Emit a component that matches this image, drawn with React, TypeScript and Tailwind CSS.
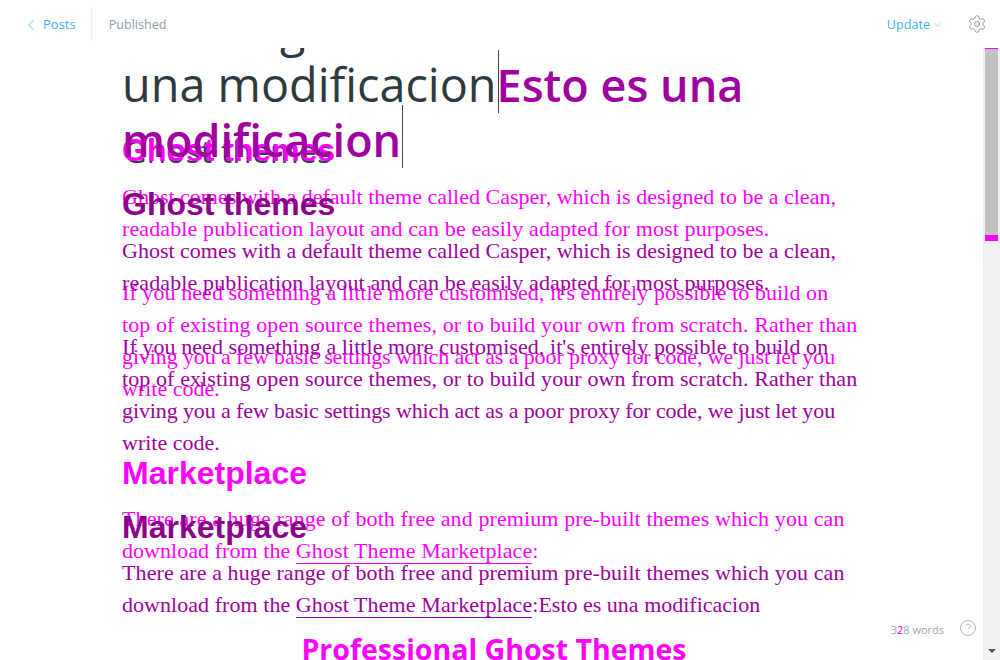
import { ChevronDown, ChevronLeft, CircleHelp, Settings } from "lucide-react";

const SANS = "font-['Open_Sans',sans-serif]";
const SERIF = "font-['Liberation_Serif',serif]";
const ARIAL = "font-['Liberation_Sans',sans-serif]";

function Caret() {
  return (
    <span className="relative inline-block w-0">
      <span className="absolute -top-[52px] left-[1px] h-[63px] w-px bg-[#444]" />
    </span>
  );
}

function Article({ tone, heading, rule, extra }: { tone: string; heading: string; rule: string; extra?: boolean }) {
  return (
    <div className={`${tone} ${SERIF} text-[22px] leading-[32px]`}>
      <h2 className={`${ARIAL} ${heading} mb-[13px] text-[32px] font-bold leading-[36px]`}>Ghost themes</h2>
      <p className="mb-[32px] whitespace-nowrap">
        Ghost comes with a default theme called Casper, which is designed to be a clean,
        <br />
        <span className="tracking-[0.125px]">readable publication layout and can be easily adapted for most purposes.</span>
      </p>
      <p className="whitespace-nowrap">
        <span className="tracking-[0.07px]">If you need something a little more customised, it's entirely possible to build on</span>
        <br />
        <span className="tracking-[0.1px]">top of existing open source themes, or to build your own from scratch. Rather than</span>
        <br />
        <span className="-tracking-[0.11px]">giving you a few basic settings which act as a poor proxy for code, we just let you</span>
        <br />
        write code.
      </p>
      <h2 className={`${ARIAL} ${heading} mb-[12px] mt-[50px] text-[32px] font-bold leading-[36px]`}>Marketplace</h2>
      <p className="whitespace-nowrap">
        <span className="tracking-[0.1px]">There are a huge range of both free and premium pre-built themes which you can</span>
        <br />
        <span className="tracking-[0.05px]">download from the </span>
        <span className={`border-b tracking-[0.1px] ${rule}`}>Ghost Theme Marketplace</span>:
        {!extra && "Esto es una modificacion"}
      </p>
      {extra && (
        <h3 className={`${SANS} mt-[62px] w-[744px] text-center text-[28.5px] font-bold leading-[40px]`}>
          Professional Ghost Themes
        </h3>
      )}
    </div>
  );
}

export default function App() {
  return (
    <div className={`flex h-[660px] w-[1000px] flex-col overflow-hidden bg-white ${SANS}`}>
      <header className="relative z-20 flex h-[48px] shrink-0 items-center bg-white pl-[22px] pr-[13px] text-[13px]">
        <a className="mt-[1px] flex items-center gap-[3px] pr-[15px] text-[#3eb0ef]">
          <ChevronLeft size={18} strokeWidth={1} />
          Posts
        </a>
        <span className="h-[36px] w-px bg-[#e5eff5]" />
        <span className="ml-[17px] mt-[2px] text-[12.6px] text-[#8e9cac]">Published</span>
        <a className="ml-auto mt-[2px] flex items-center gap-[2px] text-[12.6px] text-[#3eb0ef]">
          Update
          <ChevronDown size={12} strokeWidth={1} className="text-[#5a8fb0]" />
        </a>
        <Settings size={20} strokeWidth={1} className="ml-[23px] text-[#738a94]" />
      </header>

      <div className="relative flex min-h-0 flex-1">
        <main className="relative flex-1 overflow-hidden pl-[122px]">
          <div className="absolute left-[124px] top-[83px] whitespace-nowrap text-[31px] font-normal leading-[40px] tracking-[0.5px] text-[#394047]">
            Ghost themes
          </div>

          <div className="relative -mt-[46px]">
            <div className="absolute left-0 top-[130px] w-full">
              <Article tone="text-[#ff00ff]" heading="" rule="border-[#ff00ff]" extra />
            </div>
            <h1 className="relative z-10 mb-[19px] whitespace-nowrap text-[46.8px] font-medium leading-[55px] text-[#2e3a40]">
              Creating a custom theme Esto es
              <br />
              una modificacion
              <Caret />
              <span className="text-[45px] font-semibold text-[#a000a0]">
                Esto es una
                <br />
                modificacion
              </span>
              <Caret />
            </h1>
            <div className="relative">
              <Article tone="text-[#a000a0]" heading="text-[#8c008c]" rule="border-[#8a00c0]" />
            </div>
          </div>

          <div className="absolute bottom-[22px] right-[39px] flex items-center bg-white text-[11px] text-[#9aa9b4]">
            <span>3</span>
            <span className="text-[#e000e0]">2</span>
            <span>8 words</span>
          </div>
          <CircleHelp size={18} strokeWidth={1.2} className="absolute bottom-[23px] right-[6px] text-[#9fb2bf]" />
        </main>

        <aside className="flex w-[17px] shrink-0 flex-col items-center bg-[#f1f1f1]">
          <div className="h-[193px] w-[13px] border-b-[6px] border-t border-[#ff00ff] bg-[#c1c1c1]" />
          <div className="mb-[7px] mt-auto h-0 w-0 border-x-[4px] border-t-[4px] border-x-transparent border-t-[#505050]" />
        </aside>
      </div>
    </div>
  );
}
